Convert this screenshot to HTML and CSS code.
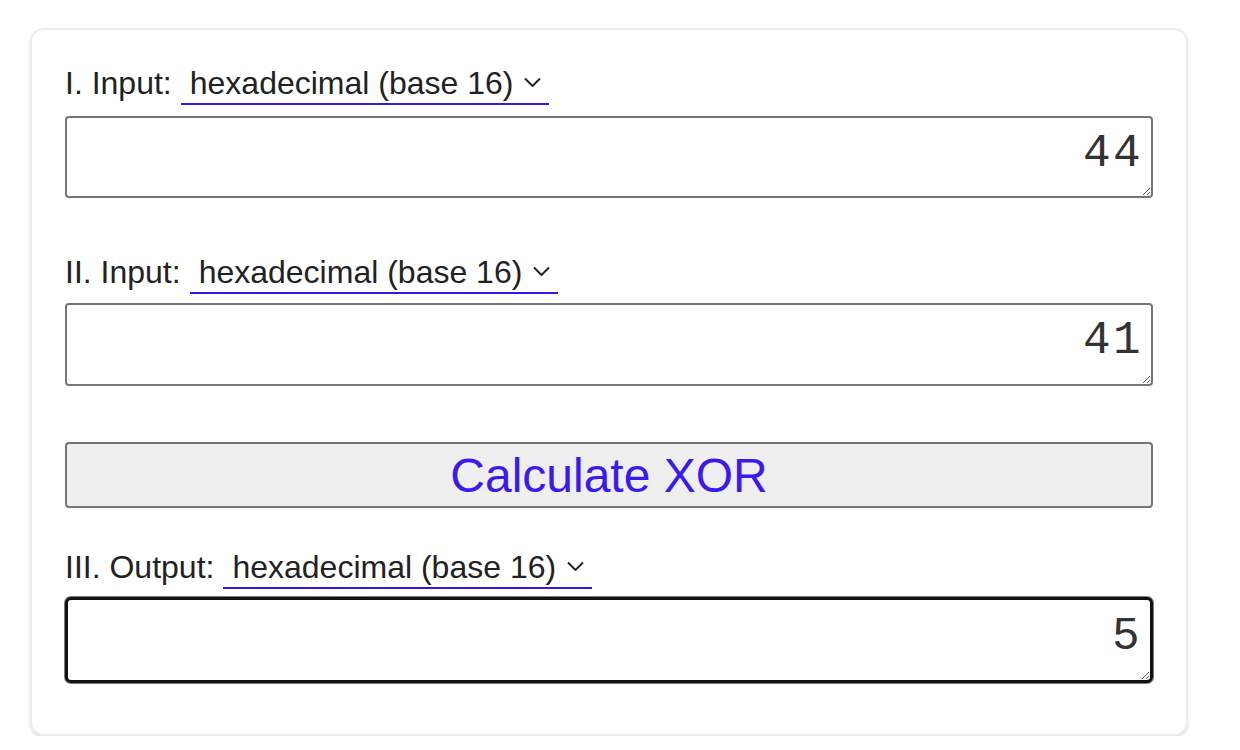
FILE: index.html
```html
<!DOCTYPE html>
<html>
<head>
<meta charset="utf-8">
<title>XOR Calculator</title>
<link rel="stylesheet" href="styles.css">
</head>
<body>
<div class="page">
  <div class="card">
    <div class="field-label row1">
      <span class="label-text">I. Input:</span>
      <span class="select">hexadecimal (base 16)<svg class="chev" width="17" height="10" viewBox="0 0 17 10"><path d="M1 1.5 L8.5 9 L16 1.5" fill="none" stroke="#222" stroke-width="2"/></svg></span>
    </div>
    <textarea class="value first">44</textarea>

    <div class="field-label row2">
      <span class="label-text">II. Input:</span>
      <span class="select">hexadecimal (base 16)<svg class="chev" width="17" height="10" viewBox="0 0 17 10"><path d="M1 1.5 L8.5 9 L16 1.5" fill="none" stroke="#222" stroke-width="2"/></svg></span>
    </div>
    <textarea class="value">41</textarea>

    <button class="calc">Calculate XOR</button>

    <div class="field-label row3">
      <span class="label-text">III. Output:</span>
      <span class="select">hexadecimal (base 16)<svg class="chev" width="17" height="10" viewBox="0 0 17 10"><path d="M1 1.5 L8.5 9 L16 1.5" fill="none" stroke="#222" stroke-width="2"/></svg></span>
    </div>
    <textarea class="value output">5</textarea>
  </div>
</div>
</body>
</html>
```

FILE: styles.css
```css
html, body {
  margin: 0;
  padding: 0;
  background: #ffffff;
}

.page {
  padding: 28px 0 0 30px;
  font-family: "Liberation Sans", Arial, sans-serif;
}

.card {
  box-sizing: border-box;
  width: 1158px;
  border: 2px solid #ececec;
  border-radius: 14px;
  box-shadow: 0 2px 3px rgba(0, 0, 0, 0.12);
  padding: 35px 33px 51px 33px;
  background: #fff;
  display: flex;
  flex-direction: column;
}

.field-label {
  display: flex;
  align-items: flex-start;
  font-size: 32px;
  line-height: 36px;
  color: #222;
}

.select {
  display: inline-flex;
  align-items: center;
  margin-left: 9px;
  padding: 0 8px 2px 9px;
  border-bottom: 2px solid #3318ee;
  color: #222;
}

.chev {
  margin-left: 11px;
  margin-top: -2px;
}

.row2 {
  margin-top: 56px;
}

.row3 {
  margin-top: 41px;
}

.value {
  box-sizing: border-box;
  display: block;
  width: 100%;
  height: 83px;
  margin: 9px 0 0 0;
  padding: 10px 8px 5px 10px;
  border: 2px solid #767676;
  border-radius: 4px;
  font-family: "Liberation Mono", "Courier New", monospace;
  font-size: 46px;
  letter-spacing: 2.4px;
  line-height: normal;
  color: #333;
  text-align: right;
  background: #fff;
  resize: vertical;
  outline: none;
}

.value.first {
  height: 82px;
  margin-top: 11px;
}

.value.output {
  height: 86px;
  margin-top: 8px;
  border: 3px solid #111;
  border-radius: 6px;
  box-shadow: 0 0 0 1px rgba(17, 17, 17, 0.55);
  padding: 11px 8px 3px 10px;
}

.calc {
  box-sizing: border-box;
  display: block;
  width: 100%;
  height: 66px;
  margin-top: 56px;
  padding: 0;
  background: #efefef;
  border: 2px solid #767676;
  border-radius: 4px;
  font-family: "Liberation Sans", Arial, sans-serif;
  font-size: 48px;
  color: #3a1aee;
  cursor: pointer;
}
```
